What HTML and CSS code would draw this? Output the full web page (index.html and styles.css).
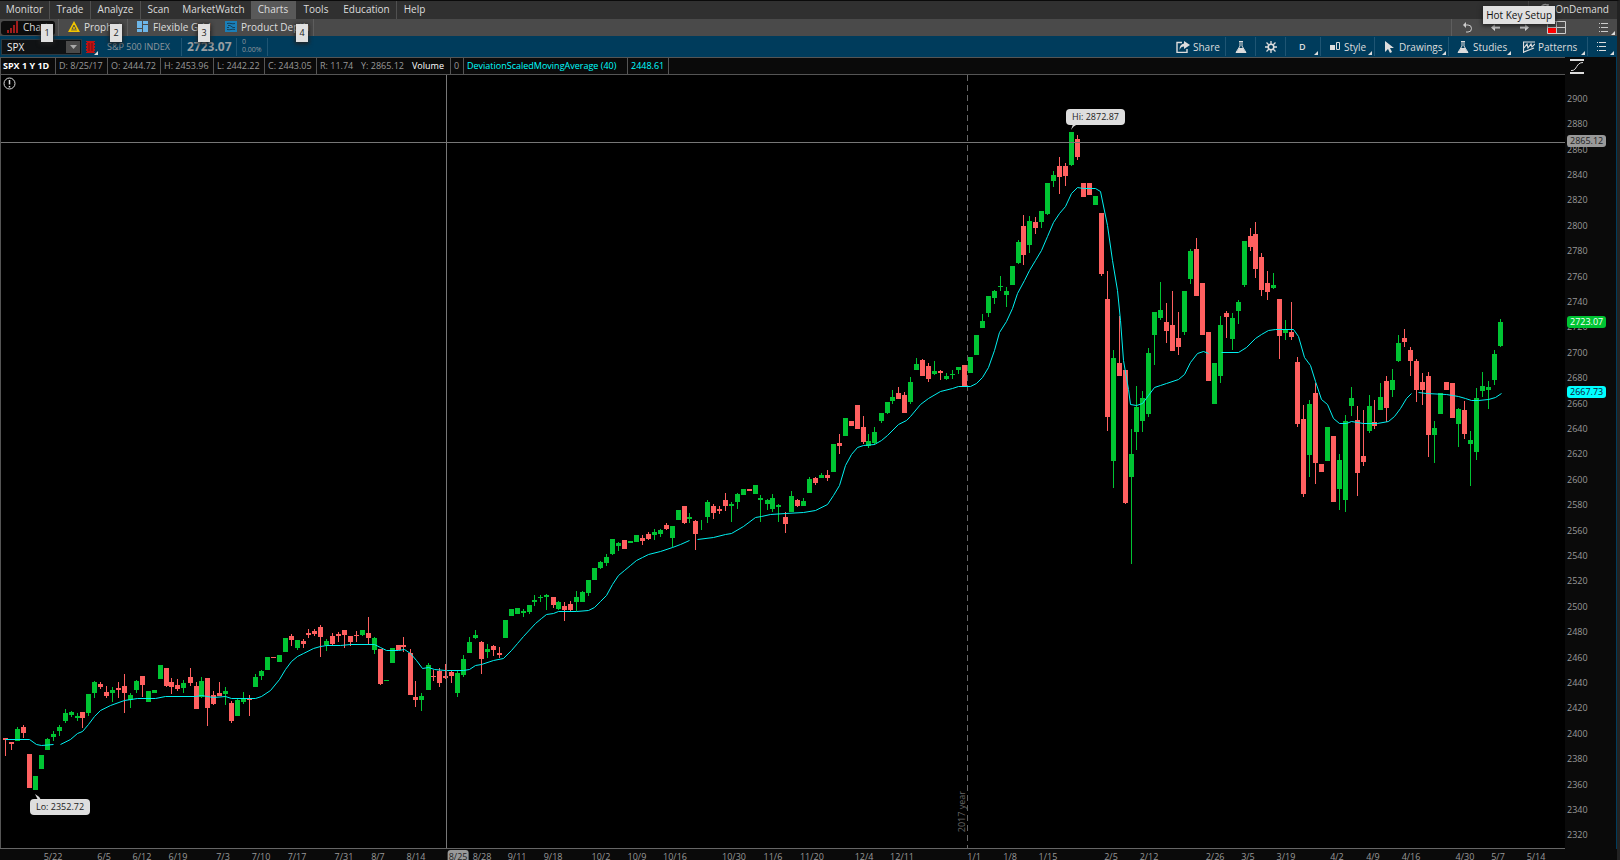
FILE: index.html
```html
<!DOCTYPE html>
<html lang="en">
<head>
<meta charset="utf-8">
<title>Charts - SPX</title>
<link rel="stylesheet" href="styles.css">
</head>
<body>
<div class="app">
  <nav class="menu" aria-label="Main">
    <button class="menu-item w50 sep">Monitor</button>
    <button class="menu-item w41 sep">Trade</button>
    <button class="menu-item w50 sep">Analyze</button>
    <button class="menu-item w36">Scan</button>
    <button class="menu-item w74">MarketWatch</button>
    <button class="menu-item w45 active">Charts</button>
    <button class="menu-item w41">Tools</button>
    <button class="menu-item w60 sep">Education</button>
    <button class="menu-item w36">Help</button>
    <button class="menu-item ondemand">
      <svg width="12" height="12" viewBox="0 0 12 12"><path d="M2 6a4 4 0 0 1 7-3M9 1v3H6" fill="none" stroke="#aaa" stroke-width="1.5"/></svg>
      OnDemand
    </button>
  </nav>

  <nav class="tabs" aria-label="Chart tabs">
    <button class="tab t1 current">
      <svg width="12" height="12" viewBox="0 0 12 12"><path d="M0 9h2v3H0zM3 7h2v5H3zM6 4h2v8H6zM9 0h2v12H9z" fill="#a01c1c"/></svg>
      <span>Charts</span><kbd>1</kbd>
    </button>
    <button class="tab t2">
      <svg width="12" height="12" viewBox="0 0 12 12"><path d="M6 0l6 11H0z" fill="#f2c500"/><path d="M6 4L4 8h4zM3 9h6" fill="#4a4a4a" stroke="#4a4a4a" stroke-width=".7"/><circle cx="6" cy="7" r="1" fill="#f2c500"/></svg>
      <span>Prophet</span><kbd>2</kbd>
    </button>
    <button class="tab t3">
      <svg width="12" height="12" viewBox="0 0 12 12"><path d="M0 0h5v7H0zM0 8h5v3H0zM6 0h5v3H6zM6 4h5v7H6z" fill="#6db6e8"/></svg>
      <span>Flexible Grid</span><kbd>3</kbd>
    </button>
    <button class="tab t4">
      <svg width="12" height="12" viewBox="0 0 12 12"><path d="M0 0h12v11H0z" fill="#1b7fb8"/><path d="M2 2.500c3-1 5 1 8 0M2 8.500c3 1 5-1 8 0M3 4.500h2l3 2h2M2 6.500h2" fill="none" stroke="#14405c"/></svg>
      <span>Product Depth</span><kbd>4</kbd>
    </button>
    <div class="tab-tools">
      <button class="icon-btn undo" aria-label="Undo"><svg width="10" height="12" viewBox="0 0 10 12"><path d="M2 3h4a3.500 3.500 0 0 1 0 7H4" fill="none" stroke="#ccc"/><path d="M1 3l3-3v6z" fill="#ccc"/></svg></button>
      <button class="icon-btn" aria-label="Back"><svg width="9" height="9" viewBox="0 0 9 9"><path d="M0 4.500L4 1v2.500h5v2H4V8z" fill="#ddd"/></svg></button>
      <button class="icon-btn" aria-label="Forward"><svg width="9" height="9" viewBox="0 0 9 9"><path d="M9 4.500L5 1v2.500H0v2h5V8z" fill="#ddd"/></svg></button>
      <button class="icon-btn layout" aria-label="Layout"><svg width="19" height="13" viewBox="0 0 19 13"><path d="M.5.5h18v12H.5zM9.500 0v13M0 6.500h19" fill="none" stroke="#ccc"/><path d="M1 7h8v5H1z" fill="#f00"/></svg></button>
      <button class="icon-btn list corner" aria-label="Tab menu"><svg width="9" height="9" viewBox="0 0 9 9"><path d="M0 0h1v1H0zM2 0h7v1H2zM0 4h1v1H0zM2 4h7v1H2zM0 8h1v1H0zM2 8h7v1H2z" fill="#ccc"/></svg></button>
    </div>
    <div class="tooltip" role="tooltip">Hot Key Setup</div>
  </nav>

  <div class="toolbar">
    <div class="symbol">
      <input type="text" value="SPX" aria-label="Symbol">
      <button aria-label="Choose symbol"><svg width="7" height="4" viewBox="0 0 7 4"><path d="M0 0h7L3.500 4z" fill="#aaa"/></svg></button>
    </div>
    <button class="link corner" aria-label="Symbol link"><svg width="9" height="12" viewBox="0 0 9 12"><path d="M0 0h9v1H8v1h1v2H8v1h1v2H8v1h1v2H8v1h1v1H0v-1h1v-1H0V8h1V7H0V5h1V4H0V2h1V1H0z" fill="#c01212"/><path d="M3 2v8M6 2v8" stroke="#6d0d12"/></svg></button>
    <span class="name">S&amp;P 500 INDEX</span>
    <span class="last">2723.07</span>
    <span class="change"><span>0</span><span>0.00%</span></span>
    <div class="tools">
      <button class="tool share"><svg width="14" height="12" viewBox="0 0 14 12"><path d="M6 1.500H1v10h10V8" fill="none" stroke="#ddd" stroke-width="1.400"/><path d="M8 0l6 4-6 4V5.500C6 5.500 4.500 6.500 3.500 9 3.500 5 5 3 8 2.500z" fill="#ddd"/></svg>Share</button>
      <button class="tool sq" aria-label="Edit studies"><svg width="12" height="12" viewBox="0 0 12 12"><path d="M4 .5h4M5 0v5L1 11.500h10L7 5V0" fill="none" stroke="#ddd"/><path d="M4 7h4l3 5H1z" fill="#ddd"/></svg></button>
      <button class="tool sq" aria-label="Settings"><svg width="12" height="12" viewBox="0 0 12 12"><circle cx="6" cy="6" r="2.800" fill="none" stroke="#ddd" stroke-width="1.600"/><path d="M6 0v3M6 9v3M0 6h3M9 6h3M1.500 1.500l2.200 2.200M8.300 8.300l2.200 2.200M10.500 1.500L8.300 3.700M3.700 8.300l-2.200 2.200" stroke="#ddd" stroke-width="1.300"/></svg></button>
      <button class="tool day corner">D</button>
      <button class="tool style corner"><svg width="10" height="9" viewBox="0 0 10 9"><path d="M0 3h5v5H0z" fill="#ddd"/><path d="M6.500.5h3v7h-3z" fill="none" stroke="#ddd"/></svg>Style</button>
      <button class="tool drawings corner"><svg width="11" height="12" viewBox="0 0 11 12"><path d="M1 0l9 7H6l2 4-2 1-2-4-3 3z" fill="#ddd"/></svg>Drawings</button>
      <button class="tool studies corner"><svg width="12" height="12" viewBox="0 0 12 12"><path d="M4 .5h4M5 0v5L1 11.500h10L7 5V0" fill="none" stroke="#ddd"/><path d="M4 7h4l3 5H1z" fill="#ddd"/></svg>Studies</button>
      <button class="tool patterns corner"><svg width="12" height="12" viewBox="0 0 12 12"><path d="M.5 12V1M0 1h12M1 7l3-4 1 4 3-4 1 3 3-3M1 11l10-4" fill="none" stroke="#ddd" stroke-width="1.200"/></svg>Patterns</button>
      <button class="tool more corner" aria-label="Chart menu"><svg width="9" height="9" viewBox="0 0 9 9"><path d="M0 0h1v1H0zM2 0h7v1H2zM0 4h1v1H0zM2 4h7v1H2zM0 8h1v1H0zM2 8h7v1H2z" fill="#ddd"/></svg></button>
    </div>
  </div>

  <main class="workspace">
    <div class="left">
      <div class="readout">
        <span class="cell title">SPX 1 Y 1D</span>
        <span class="cell c52">D: 8/25/17</span>
        <span class="cell c53">O: 2444.72</span>
        <span class="cell c53">H: 2453.96</span>
        <span class="cell c51">L: 2442.22</span>
        <span class="cell c52">C: 2443.05</span>
        <span class="cell plain c41">R: 11.74</span>
        <span class="cell plain c51">Y: 2865.12</span>
        <span class="cell volume">Volume</span>
        <span class="cell zero">0</span>
        <span class="cell study">DeviationScaledMovingAverage (40)</span>
        <span class="cell value">2448.61</span>
      </div>
      <div class="plot" id="plot">
        <svg id="chart" viewBox="1 75 1564 773" preserveAspectRatio="none" role="img" aria-label="SPX daily candlestick chart"></svg>
        <svg class="info" width="13" height="13" viewBox="0 0 13 13"><circle cx="6.500" cy="6.500" r="5.500" fill="none" stroke="#ddd"/><path d="M6.500 3v4.500M6.500 9v1.500" stroke="#ddd" stroke-width="1.500"/></svg>
        <span class="year">2017 year</span>
        <span class="bubble high">Hi: 2872.87<svg width="8" height="6" viewBox="0 0 8 6"><path d="M0 6L2 0h5Q2 2 0 6z" fill="#dedede"/></svg></span>
        <span class="bubble low">Lo: 2352.72<svg width="8" height="6" viewBox="0 0 8 6"><path d="M0 0q4 2 6 6H3z" fill="#dedede"/></svg></span>
      </div>
    </div>
    <aside class="prices">
      <button class="scale-btn" aria-label="Axis scale"><svg width="14" height="15" viewBox="0 0 14 15"><path d="M0 1h14M0 14h14" stroke="#ddd" stroke-width="2"/><path d="M1 11.500h1c5 0 4-8 11-8" fill="none" stroke="#ddd"/></svg></button>
      <div class="price-scale" id="prices"></div>
    </aside>
    <div class="dates" id="dates"></div>
  </main>
</div>
<script src="chart.js"></script>
</body>
</html>
```
FILE: styles.css
```css
* { box-sizing: border-box; }
body {
  margin: 0;
  background: #0a0a0a;
  color: #ddd;
  font: 9px/12px "Open Sans", "Noto Sans", sans-serif;
}
button, input {
  margin: 0;
  padding: 0;
  border: 0;
  background: none;
  color: inherit;
  font: inherit;
}
svg { flex: none; display: block; }
.app {
  display: flex;
  flex-direction: column;
  height: 100vh;
  overflow: hidden;
  border-top: 1px solid #0a0a0a;
  border-right: 3px solid #222;
}

/* Main menu */
.menu { display: flex; height: 18px; background: #303030; font-size: 10px; }
.menu-item { padding-bottom: 2px; white-space: nowrap; border-right: 1px solid transparent; }
.menu-item.sep { border-right-color: #505050; }
.menu-item.active { background: #595959; }
.w36 { width: 36px; }
.w41 { width: 41px; }
.w45 { width: 45px; }
.w50 { width: 50px; }
.w60 { width: 60px; }
.w74 { width: 74px; }
.menu-item.ondemand {
  display: flex;
  align-items: center;
  gap: 4px;
  margin-left: auto;
  padding: 0 7px 2px 10px;
  border-left: 1px solid #444;
}

/* Tabs */
.tabs { position: relative; display: flex; height: 17px; background: #4a4a4a; font-size: 10px; }
.tab {
  position: relative;
  display: flex;
  align-items: center;
  gap: 4px;
  padding-bottom: 1px;
  border-right: 1px solid #5e5e5e;
  white-space: nowrap;
}
.tab span { overflow: hidden; }
.t1 { width: 59px; padding-left: 7px; }
.t2 { width: 69px; padding-left: 9px; }
.t3 { width: 88px; padding-left: 9px; border-color: transparent; }
.t4 { width: 98px; padding-left: 9px; }
.tab.current::before {
  content: "";
  position: absolute;
  inset: 2px 3px 1px 1px;
  border-radius: 3px;
  background: #0c0c0c;
}
.tab.current svg, .tab.current span { position: relative; }
.tab kbd {
  position: absolute;
  z-index: 2;
  right: 5px;
  top: 5px;
  width: 12px;
  height: 18px;
  background: #e0e0e0;
  color: #222;
  box-shadow: 0 1px 4px 1px #222;
  font: 9px/18px "Open Sans", sans-serif;
  text-align: center;
}
.tab-tools {
  display: flex;
  align-items: center;
  margin-left: auto;
  border-left: 1px solid #5e5e5e;
}
.icon-btn { position: relative; display: grid; place-items: center; width: 29px; height: 17px; }
.icon-btn.layout { width: 35px; }
.icon-btn.list { width: 43px; padding-left: 15px; }
.corner::after {
  content: "";
  position: absolute;
  right: 2px;
  bottom: 1px;
  border-left: 4px solid transparent;
  border-bottom: 4px solid #ddd;
}
.tooltip {
  position: absolute;
  z-index: 3;
  right: 62px;
  top: -13px;
  padding: 3px 3px;
  background: #e0e0e0;
  color: #111;
  box-shadow: 0 1px 4px 1px #222;
  white-space: nowrap;
}

/* Toolbar */
.toolbar {
  display: flex;
  align-items: center;
  height: 21px;
  border-right: 1px solid #003c5c;
  background: #003c5c;
  font-size: 10px;
}
.symbol {
  display: flex;
  align-items: center;
  width: 81px;
  height: 16px;
  margin-left: 1px;
  padding: 1px;
  border: 1px solid #2c3a42;
  background: #101214;
}
.symbol input { flex: 1; min-width: 0; padding-left: 4px; color: #eee; }
.symbol button { display: grid; place-items: center; width: 14px; height: 12px; background: #4a4a4a; }
.link { position: relative; width: 16px; height: 17px; padding: 1px 0 0 4px; }
.link::after { right: 0; bottom: 0; }
.name, .last, .change {
  display: flex;
  align-items: center;
  height: 18px;
  border-right: 1px solid #1f5573;
  color: #8e979c;
  white-space: nowrap;
}
.name { width: 84px; padding-left: 9px; font-size: 9px; }
.last { width: 55px; padding-left: 5px; color: #9a9fa2; font-weight: 700; font-size: 12px; }
.change {
  flex-direction: column;
  align-items: flex-start;
  width: 31px;
  padding-left: 5px;
  font-size: 7px;
  line-height: 8px;
}
.tools { display: flex; margin-left: auto; }
.tool {
  position: relative;
  display: flex;
  align-items: center;
  gap: 4px;
  height: 19px;
  padding-left: 9px;
  border-left: 1px solid #1f5573;
  white-space: nowrap;
}
.share { width: 58px; padding-left: 8px; gap: 3px; border-color: transparent; }
.sq { width: 30px; }
.day { width: 35px; padding-left: 13px; font-weight: 600; font-size: 9px; }
.style { width: 54px; }
.drawings { width: 74px; }
.studies { width: 65px; padding-left: 8px; }
.patterns { width: 74px; gap: 3px; border-color: transparent; }
.more { width: 29px; }

/* Workspace */
.workspace {
  flex: 1;
  min-height: 0;
  display: grid;
  grid-template-columns: minmax(0, 1fr) 52px;
  grid-template-rows: minmax(0, 1fr) 11px;
}
.left {
  display: flex;
  flex-direction: column;
  min-height: 0;
  border-bottom: 1px solid #666;
}
.readout {
  display: flex;
  height: 18px;
  border: 1px solid #555;
  border-width: 1px 0 1px 1px;
  color: #999;
  line-height: 16px;
}
.cell { padding: 0 3px; border-right: 1px solid #555; white-space: nowrap; }
.cell.plain { border-color: transparent; }
.cell.title { width: 55px; padding: 0 2px; color: #fff; font-weight: 700; }
.c41 { width: 41px; }
.c51 { width: 51px; }
.c52 { width: 52px; }
.c53 { width: 53px; }
.cell.volume { width: 42px; color: #fff; }
.cell.zero { width: 13px; }
.cell.study { width: 164px; }
.cell.value { width: 41px; }
.cell.study, .cell.value { color: #0ff; }
.plot { position: relative; flex: 1; min-height: 0; background: #000; border-left: 1px solid #555; }
#chart { display: block; width: 100%; height: 100%; }
.info { position: absolute; left: 2px; top: 2px; }
.year {
  position: absolute;
  right: 38.2%;
  bottom: 16px;
  writing-mode: vertical-rl;
  transform: rotate(180deg);
  color: #666;
}
.bubble {
  position: absolute;
  padding: 2px 6px;
  border-radius: 4px;
  background: #dedede;
  color: #222;
  white-space: nowrap;
}
.bubble svg { position: absolute; left: 5px; }
.bubble.high { left: 68.1%; top: 34px; }
.bubble.high svg { top: 15px; }
.bubble.low { left: 29px; bottom: 33px; }
.bubble.low svg { top: -5px; }
.prices { position: relative; display: flex; flex-direction: column; min-height: 0; border-right: 1px solid #003c5c; }
.scale-btn { height: 18px; padding: 0 0 0 5px; }
.price-scale { position: relative; flex: 1; }
.price {
  position: absolute;
  left: 2px;
  transform: translateY(-50%);
  color: #999;
}
.price.tag { margin-top: -2px; padding: 0 3px; border-radius: 3px; }
.tag.cursor { background: #999; color: #222; }
.tag.last-price { background: #00c433; color: #fff; }
.tag.average { background: #0ff; color: #113; }
.dates { position: relative; overflow: hidden; margin-right: 52px; grid-column: 1 / -1; }
.date { position: absolute; top: 2px; transform: translateX(-50%); color: #999; }
.date.cursor { top: 1px; padding: 1px 1px 0; border-radius: 3px; background: #999; color: #222; }

/* Chart marks */
.up { fill: #00c433; }
.down { fill: #ff6060; }
.average-line { fill: none; stroke: #00f0f0; stroke-width: 1; }
.crosshair { stroke: #777; stroke-width: 1; }
.year-line { stroke: #666; stroke-width: 1; stroke-dasharray: 6 4; }
```
FILE: chart.js
```js
// Each candle: direction, x, high, body top, body bottom, low (plot units).
const candles = `
r 5 738 738 740 756|r 11 742 742 744 750|g 17 727 729 741 741|r 23 725 727 733 738|r 29 754 754 788 788
g 35 776 776 790 790|g 41 755 755 769 769|g 47 738 739 750 750|g 53 731 734 737 741|g 59 725 727 731 736
g 65 709 713 721 723|g 71 711 712 715 717|g 77 713 716 718 721|r 82 712 712 718 728|g 88 694 694 713 716
g 94 681 682 693 698|r 100 682 684 687 689|r 106 686 692 696 698|g 112 687 690 693 702|r 118 682 688 690 698
r 124 674 686 693 713|g 130 693 695 700 708|g 136 680 681 690 693|r 142 676 676 685 697|g 148 691 691 702 702
g 154 690 690 693 693|g 160 665 665 679 679|r 166 668 668 686 687|r 171 678 682 687 694|r 177 679 685 689 691
g 183 680 683 688 693|r 190 668 677 683 686|r 196 682 686 709 709|g 201 677 681 697 698|r 207 678 678 708 726
r 213 691 695 704 705|r 219 682 693 696 696|g 225 687 691 694 705|r 231 701 703 721 723|g 237 699 700 716 716
g 243 692 699 702 704|r 249 695 699 700 716|g 255 674 677 687 687|g 261 670 671 676 680|g 267 657 657 670 670
r 273 657 657 658 658|g 279 655 655 662 662|g 285 638 638 652 652|r 291 634 636 640 646|g 297 640 640 648 650
r 303 639 641 644 648|r 308 629 633 635 638|r 314 629 631 634 636|r 320 625 627 637 657|g 326 639 641 645 651
r 332 633 636 644 645|r 338 632 634 636 642|r 344 630 630 635 648|r 350 636 636 642 646|r 356 631 635 636 642
g 362 630 630 635 636|r 368 617 633 638 645|g 374 637 638 650 654|r 380 649 649 684 685|g 386 680 680 681 681
g 392 648 648 663 663|r 398 645 645 650 650|r 403 637 645 647 652|r 410 649 653 695 695|r 415 681 697 700 707
g 421 693 696 700 711|g 428 663 665 690 690|r 433 670 676 677 681|r 439 668 671 683 687|r 445 664 676 678 679
r 451 671 672 676 683|g 457 671 673 693 697|g 463 655 659 675 677|g 469 637 642 653 653|g 475 630 635 638 639
r 481 641 642 659 674|g 487 644 649 652 658|r 493 645 646 650 656|r 499 647 653 655 658|g 505 620 620 638 638
g 511 609 609 616 616|g 517 608 608 614 614|g 523 609 611 613 617|g 529 605 605 612 614|g 534 595 600 602 606
g 540 595 597 598 602|g 546 594 595 597 610|r 553 597 597 605 608|g 558 601 602 609 610|r 564 602 606 610 621
r 570 601 604 610 612|g 576 591 597 602 611|g 582 591 592 602 602|g 588 580 580 593 596|g 594 568 568 580 580
g 600 561 562 568 569|g 606 554 557 563 566|g 612 539 539 554 555|g 618 542 543 546 551|r 624 540 540 549 549
g 630 541 541 543 543|g 636 535 535 542 542|r 642 535 538 541 545|r 648 532 534 539 540|g 654 529 532 535 540
g 660 529 530 534 537|r 666 523 525 529 530|g 672 526 526 538 547|g 678 510 510 520 520|r 684 506 506 523 524
g 689 513 517 519 523|r 695 520 521 534 550|g 701 520 520 520 530|g 707 500 502 517 523|r 713 504 506 513 519
r 719 506 509 511 514|r 725 493 500 506 511|g 731 502 504 506 522|g 737 493 494 502 509|g 743 489 489 495 495
r 749 489 489 491 491|g 755 485 485 494 494|g 760 495 498 500 522|g 767 499 500 504 510|g 772 494 498 509 512
g 778 504 505 507 522|r 785 512 517 524 533|g 791 491 496 512 512|r 797 499 500 506 507|g 803 498 501 506 506
g 809 477 479 493 493|r 815 477 478 483 485|g 821 473 475 478 478|r 827 470 475 478 481|g 833 444 444 472 472
r 839 434 443 446 454|g 845 418 418 436 436|r 851 421 421 426 426|r 857 405 405 429 429|r 863 416 427 442 444
g 868 434 441 446 448|g 874 427 432 443 445|g 881 413 413 421 423|g 887 402 402 413 414|g 892 390 397 401 404
r 898 387 393 399 399|r 904 392 395 413 413|g 910 377 382 402 404|g 916 358 364 370 370|r 922 359 360 376 376
r 928 363 366 379 382|g 934 361 371 374 375|r 940 370 371 373 380|g 946 373 376 379 380|g 952 370 374 375 379
g 958 367 367 370 374|r 964 365 365 386 386|g 970 357 357 373 373|g 976 335 335 355 355|g 982 314 321 328 328
g 988 296 296 313 317|g 994 290 291 298 304|g 1000 276 286 287 291|g 1006 287 291 295 307|g 1012 266 266 285 285
g 1018 240 242 263 264|r 1023 215 226 255 265|g 1029 216 221 245 253|r 1035 217 222 228 234|g 1041 211 211 222 228
g 1047 183 183 214 215|g 1053 171 175 181 187|r 1059 157 166 177 194|r 1065 163 166 176 186|g 1071 132 132 165 166
r 1077 135 139 157 160|r 1083 183 183 197 197|r 1089 183 183 195 195|g 1095 196 196 205 205|r 1101 213 213 274 276
r 1107 271 299 417 431|g 1113 350 358 461 488|r 1119 316 363 376 376|r 1125 370 370 503 504|g 1131 429 454 477 564
g 1136 386 407 432 450|g 1142 391 398 421 432|g 1148 348 353 414 417|g 1154 312 312 335 365|g 1160 282 310 318 320
r 1166 303 322 331 343|r 1172 291 325 351 351|r 1178 312 338 347 355|g 1184 291 291 332 335|g 1190 249 251 279 284
r 1196 238 249 296 296|r 1202 283 283 335 335|r 1208 332 332 381 381|g 1214 363 363 404 404|g 1220 316 325 376 383
r 1226 311 313 317 338|g 1232 313 318 339 350|g 1238 300 302 311 324|g 1244 241 241 285 287|r 1250 228 236 247 251
r 1255 222 234 269 278|r 1261 253 257 290 296|r 1267 271 283 292 300|g 1273 273 285 288 289|r 1279 299 299 336 359
g 1285 320 329 333 340|r 1291 302 332 337 340|r 1297 357 362 424 427|r 1303 405 419 494 497|g 1309 400 404 455 477
r 1315 383 393 463 484|r 1321 464 464 472 472|g 1327 427 427 461 461|r 1333 436 436 502 502|g 1339 454 460 489 510
g 1345 415 421 500 512|g 1351 387 398 406 416|r 1357 406 420 473 496|r 1363 410 456 462 466|g 1369 395 406 431 433
r 1374 400 422 426 429|g 1380 383 397 410 410|r 1386 376 381 408 422|g 1392 369 380 390 397|g 1398 335 343 361 362
r 1404 329 338 342 347|r 1410 347 350 361 376|r 1416 359 361 390 402|r 1422 373 382 390 405|r 1428 372 376 435 457
g 1434 421 428 435 463|g 1440 393 393 414 414|r 1446 382 382 390 390|r 1452 383 383 418 418|g 1458 408 409 424 447
r 1464 401 410 434 439|g 1470 431 440 444 486|g 1476 388 398 452 460|g 1482 372 386 391 397|g 1488 381 387 390 409
g 1494 350 354 380 385|g 1500 319 322 346 347`.trim().split(/[|\n]/).map(row => row.split(" "));

// Moving average, one entry for each unbroken run.
const averages = [
  "5,739 29,739 36,744 41,745 53,744",
  "60,744 70,739 77,733 82,731 88,724 94,716 100,710 110,705 124,700 137,698 155,698 165,696 195,696 201,695 213,697 225,696 231,698 255,698 261,696 270,690 279,679 285,669 291,661 297,656 303,653 313,648 320,646 326,645 340,645 350,644 374,644 380,647 386,650 398,650 404,649 410,653 416,660 422,668 428,667 434,669 445,670 463,670 469,669 475,665 481,664 493,660 503,658 511,650 517,643 523,636 535,623 541,618 546,614 553,613 558,611 576,611 588,610 594,607 600,601 606,595 612,584 618,575 624,570 630,565 636,560 642,557 648,554 660,551 672,547 680,544 689,540",
  "697,539 713,537 725,534 731,533 743,526 755,517 761,516 770,514 785,513 803,512 815,510 827,504 833,495 839,485 845,465 851,454 857,447 863,445 874,444 881,440 887,435 898,424 906,420 910,416 920,404 928,398 940,391 952,388 958,386 970,386 976,383 982,377 988,367 994,350 999,332 1006,321 1012,308 1017,293 1024,280 1029,270 1035,260 1041,250 1047,236 1053,222 1059,213 1065,206 1071,193 1077,187 1083,188 1095,188 1100,191 1107,225 1112,260 1117,290 1120,320 1123,360 1128,389 1130,404 1136,405 1142,403 1148,395 1154,387 1160,385 1166,383 1178,379 1184,374 1190,362 1197,353 1203,351 1208,353",
  "1221,352 1238,352 1246,347 1255,338 1261,334 1268,330 1275,329 1293,329 1298,336 1304,357 1310,365 1315,381 1321,399 1327,404 1333,418 1339,423 1346,423 1351,421 1363,423 1377,423 1388,421 1394,416 1400,408 1406,398 1411,393",
  "1418,392 1426,393 1446,394 1458,396 1465,398 1471,400 1478,400 1488,399 1495,397 1501,393"
];

const width = 1565, top0 = 75, height = 773;
const rect = (cls, x, y, w, h) =>
  `<rect class="${cls}" x="${x}" y="${y}" width="${w}" height="${h}"/>`;

let marks = `<line class="year-line" x1="967.5" x2="967.5" y1="75" y2="848"/>`;
for (const [dir, ...nums] of candles) {
  const [x, high, top, bottom, low] = nums.map(Number);
  const cls = dir === "g" ? "up" : "down";
  marks += rect(cls, x, high, 1, low - high);
  if (bottom > top) marks += rect(cls, x - 2, top, 5, bottom - top);
}
marks = `<g shape-rendering="crispEdges">${marks}</g>`;
const averageLines = averages.map(run => `<polyline class="average-line" points="${run}"/>`).join("");
marks += `<g transform="translate(0.5 0.5)">${averageLines}</g>`;
marks += `<line class="crosshair" x1="446.5" x2="446.5" y1="75" y2="848"/>
<line class="crosshair" x1="0" x2="1565" y1="142.5" y2="142.5"/>`;
document.getElementById("chart").innerHTML = marks;

const priceTop = p => ((98.9 + (2900 - p) * 1.268 - top0) / height) * 100;
const priceLabel = (p, text, cls) =>
  `<span class="price ${cls}" style="top:${priceTop(p).toFixed(2)}%">${text}</span>`;
let prices = "";
for (let p = 2900; p >= 2320; p -= 20) prices += priceLabel(p, p, "");
prices += priceLabel(2865.12, "2865.12", "tag cursor");
prices += priceLabel(2723.07, "2723.07", "tag last-price");
prices += priceLabel(2667.73, "2667.73", "tag average");
document.getElementById("prices").innerHTML = prices;

const dates = { "5/22": 53, "6/5": 104, "6/12": 142, "6/19": 178, "7/3": 223, "7/10": 261, "7/17": 297, "7/31": 344,
  "8/7": 378, "8/14": 416, "8/25": 458, "8/28": 482, "9/11": 517, "9/18": 553, "10/2": 601, "10/9": 637,
  "10/16": 675, "10/30": 734, "11/6": 773, "11/20": 812, "12/4": 864, "12/11": 902, "1/1": 974, "1/8": 1010,
  "1/15": 1048, "2/5": 1111, "2/12": 1149, "2/26": 1215, "3/5": 1248, "3/19": 1286, "4/2": 1337, "4/9": 1373,
  "4/16": 1411, "4/30": 1465, "5/7": 1498, "5/14": 1536 };
document.getElementById("dates").innerHTML = Object.entries(dates).map(([label, x]) =>
  `<span class="date${label === "8/25" ? " cursor" : ""}" style="left:${(x / width * 100).toFixed(2)}%">${label}</span>`).join("");
```
